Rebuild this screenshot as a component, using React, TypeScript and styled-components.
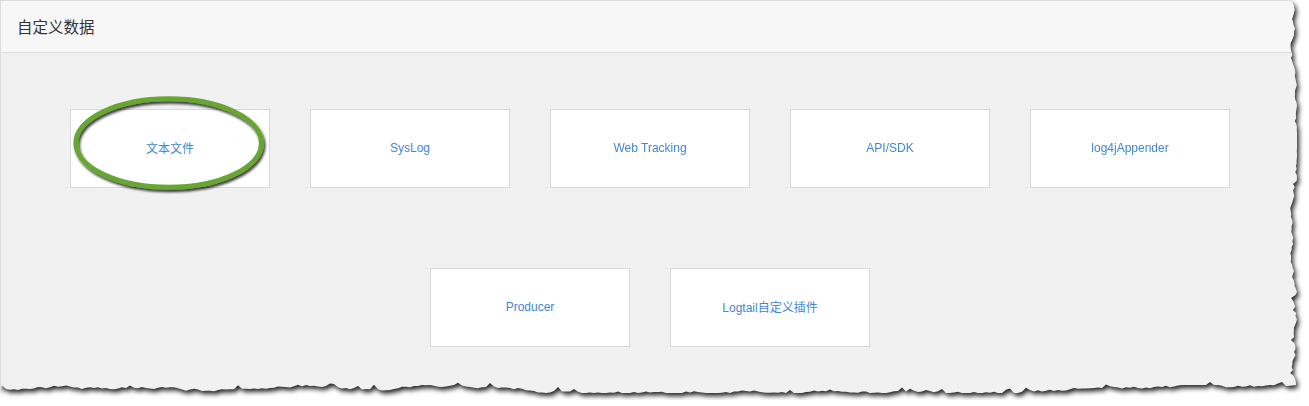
import React from 'react';
import styled, { createGlobalStyle } from 'styled-components';

const sources = ['文本文件', 'SysLog', 'Web Tracking', 'API/SDK', 'log4jAppender', 'Producer', 'Logtail自定义插件'];

// ragged right and bottom edge, like a torn sheet
function tornEdge(): string {
  let seed = 11;
  const rnd = () => {
    seed = (seed * 9301 + 49297) % 233280;
    return seed / 233280;
  };
  const pts: string[] = ['0px 0px', '1288px 0px', '1292px 2px', '1294px 6px'];
  let x = 1294;
  for (let y = 10; y < 383; y += 3) {
    x += (rnd() - 0.5) * 3.2;
    x = Math.max(1289, Math.min(1297, x));
    const spike = rnd() > 0.93 ? -3 : 0;
    pts.push(`${(x + spike).toFixed(1)}px ${y}px`);
  }
  pts.push('1296px 385px');
  let y = 386;
  for (let px = 1290; px > 0; px -= 4) {
    y += (rnd() - 0.5) * 3;
    y = Math.max(385, Math.min(393, y));
    const spike = rnd() > 0.9 ? -3 : 0;
    pts.push(`${px}px ${(y + spike).toFixed(1)}px`);
  }
  pts.push('0px 390px');
  return `polygon(${pts.join(', ')})`;
}

const EDGE = tornEdge();

const GlobalStyle = createGlobalStyle`
  html, body {
    margin: 0;
    padding: 0;
    background: #fff;
  }
  body {
    font-family: 'Liberation Sans', Arial, 'Noto Sans CJK SC', sans-serif;
  }
`;

export default function App() {
  return (
    <>
      <GlobalStyle />
      <Shadow>
        <Panel style={{ clipPath: EDGE }}>
          <Header>
            <Title>自定义数据</Title>
          </Header>
          <Body>
            <CardGrid>
              {sources.map((name, index) => (
                <Card key={name}>
                  <CardLabel>{name}</CardLabel>
                  {index === 0 && (
                    <Mark width='200' height='106' viewBox='0 0 200 106'>
                      <defs>
                        <filter id='markShadow' x='-10%' y='-10%' width='120%' height='130%'>
                          <feDropShadow dx='1.5' dy='2.5' stdDeviation='1.3' floodColor='#000' floodOpacity='0.75' />
                        </filter>
                      </defs>
                      <ellipse cx='96.7' cy='49' rx='92.8' ry='44.3' fill='none' stroke='#67a630' strokeWidth='5' filter='url(#markShadow)' />
                    </Mark>
                  )}
                </Card>
              ))}
            </CardGrid>
          </Body>
        </Panel>
      </Shadow>
    </>
  );
}

const Shadow = styled.div`
  width: 1300px;
  height: 400px;
  filter: drop-shadow(2px 3px 2.5px rgba(0, 0, 0, 0.88));
`;

const Panel = styled.section`
  box-sizing: border-box;
  width: 1300px;
  height: 396px;
  background: #f1f1f1;
  border-top: 1px solid #dcdcdc;
  border-left: 1px solid #dcdcdc;
`;

const Header = styled.header`
  box-sizing: border-box;
  height: 52px;
  display: flex;
  align-items: center;
  padding: 0 0 2px 16px;
  background: #f7f7f7;
  border-bottom: 1px solid #dcdcdc;
`;

const Title = styled.h2`
  margin: 0;
  font-size: 15.5px;
  font-weight: normal;
  color: #333;
  font-family: 'Liberation Sans', 'Noto Sans CJK SC', sans-serif;
`;

const Body = styled.div`
  padding-top: 56px;
  margin-left: -1px;
`;

const CardGrid = styled.div`
  width: 1160px;
  margin: 0 auto;
  display: flex;
  flex-wrap: wrap;
  justify-content: center;
  column-gap: 40px;
  row-gap: 80px;
`;

const Card = styled.div`
  position: relative;
  box-sizing: border-box;
  width: 200px;
  height: 79px;
  display: flex;
  align-items: center;
  justify-content: center;
  padding-bottom: 2px;
  background: #fff;
  border: 1px solid #d9d9d9;
`;

const CardLabel = styled.span`
  font-size: 12px;
  color: #4286d5;
  font-family: 'Liberation Sans', 'Noto Sans CJK SC', sans-serif;
`;

const Mark = styled.svg`
  position: absolute;
  left: 1px;
  top: -16px;
  overflow: visible;
  pointer-events: none;
`;
